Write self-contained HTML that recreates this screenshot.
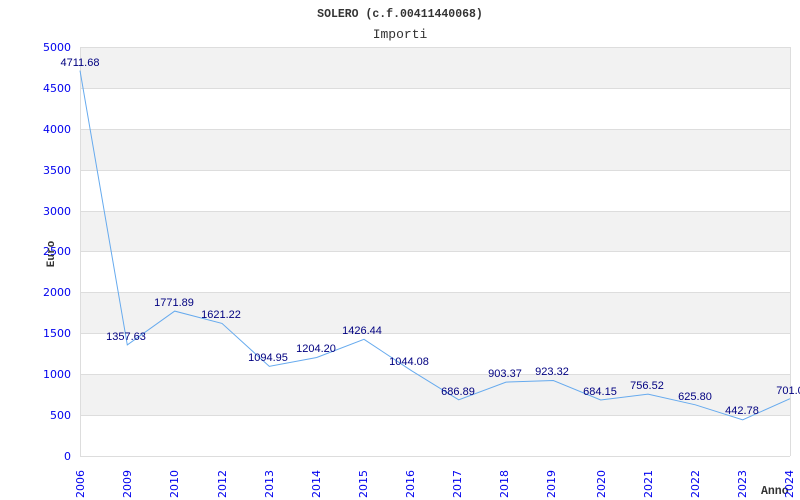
<!DOCTYPE html>
<html><head><meta charset="utf-8"><style>html,body{margin:0;padding:0;background:#fff}svg{display:block}</style></head><body>
<svg width="800" height="500" xmlns="http://www.w3.org/2000/svg" font-family="Liberation Sans, sans-serif">
<rect width="800" height="500" fill="#fff"/>
<g fill="#f2f2f2">
<rect x="80" y="47" width="710" height="41"/>
<rect x="80" y="129" width="710" height="41"/>
<rect x="80" y="211" width="710" height="40"/>
<rect x="80" y="292" width="710" height="41"/>
<rect x="80" y="374" width="710" height="41"/>
</g>
<g stroke="#dddddd" stroke-width="1">
<line x1="80" y1="47.5" x2="790" y2="47.5"/><line x1="80" y1="88.5" x2="790" y2="88.5"/>
<line x1="80" y1="129.5" x2="790" y2="129.5"/><line x1="80" y1="170.5" x2="790" y2="170.5"/>
<line x1="80" y1="211.5" x2="790" y2="211.5"/><line x1="80" y1="251.5" x2="790" y2="251.5"/>
<line x1="80" y1="292.5" x2="790" y2="292.5"/><line x1="80" y1="333.5" x2="790" y2="333.5"/>
<line x1="80" y1="374.5" x2="790" y2="374.5"/><line x1="80" y1="415.5" x2="790" y2="415.5"/>
<line x1="80" y1="456.5" x2="790" y2="456.5"/>
<line x1="80.5" y1="47" x2="80.5" y2="456"/><line x1="790.5" y1="47" x2="790.5" y2="456"/>
</g>
<text x="400" y="17" text-anchor="middle" font-family="Liberation Mono, monospace" font-weight="bold" font-size="11.5" fill="#333">SOLERO (c.f.00411440068)</text>
<text x="400" y="38" text-anchor="middle" font-family="Liberation Mono, monospace" font-size="13" fill="#333">Importi</text>
<g fill="#0000ee" font-size="11" font-family="DejaVu Sans, sans-serif" text-anchor="end">
<text x="71" y="51">5000</text><text x="71" y="92">4500</text><text x="71" y="133">4000</text>
<text x="71" y="174">3500</text><text x="71" y="215">3000</text><text x="71" y="255">2500</text>
<text x="71" y="296">2000</text><text x="71" y="337">1500</text><text x="71" y="378">1000</text>
<text x="71" y="419">500</text><text x="71" y="460">0</text>
</g>
<text transform="translate(54,254) rotate(-90)" text-anchor="middle" font-family="Liberation Mono, monospace" font-weight="bold" font-size="11" fill="#333">Euro</text>
<text x="761" y="494" font-family="Liberation Mono, monospace" font-weight="bold" font-size="11.5" fill="#333">Anno</text>
<g fill="#0000ee" font-size="11" font-family="DejaVu Sans, sans-serif">
<text transform="translate(84,498) rotate(-90)">2006</text>
<text transform="translate(131,498) rotate(-90)">2009</text>
<text transform="translate(178,498) rotate(-90)">2010</text>
<text transform="translate(226,498) rotate(-90)">2012</text>
<text transform="translate(273,498) rotate(-90)">2013</text>
<text transform="translate(320,498) rotate(-90)">2014</text>
<text transform="translate(367,498) rotate(-90)">2015</text>
<text transform="translate(414,498) rotate(-90)">2016</text>
<text transform="translate(461,498) rotate(-90)">2017</text>
<text transform="translate(508,498) rotate(-90)">2018</text>
<text transform="translate(555,498) rotate(-90)">2019</text>
<text transform="translate(605,498) rotate(-90)">2020</text>
<text transform="translate(652,498) rotate(-90)">2021</text>
<text transform="translate(699,498) rotate(-90)">2022</text>
<text transform="translate(746,498) rotate(-90)">2023</text>
<text transform="translate(793,498) rotate(-90)">2024</text>
</g>
<polyline fill="none" stroke="#66aaee" stroke-width="1" points="80,70.6 127.3,344.9 174.7,311.1 222,323.4 269.3,366.4 316.7,357.5 364,339.3 411.3,370.6 458.7,399.8 506,382.1 553.3,380.5 600.7,400 648,394.1 695.3,404.8 742.7,419.8 790,398.7"/>
<g fill="#000080" font-size="11" text-anchor="middle">
<text x="80" y="66">4711.68</text>
<text x="126" y="340">1357.63</text>
<text x="174" y="306">1771.89</text>
<text x="221" y="318">1621.22</text>
<text x="268" y="361">1094.95</text>
<text x="316" y="352">1204.20</text>
<text x="362" y="334">1426.44</text>
<text x="409" y="365">1044.08</text>
<text x="458" y="395">686.89</text>
<text x="505" y="377">903.37</text>
<text x="552" y="375">923.32</text>
<text x="600" y="395">684.15</text>
<text x="647" y="389">756.52</text>
<text x="695" y="400">625.80</text>
<text x="742" y="414">442.78</text>
<text x="790" y="394">701.0</text>
</g>
</svg>
</body></html>
